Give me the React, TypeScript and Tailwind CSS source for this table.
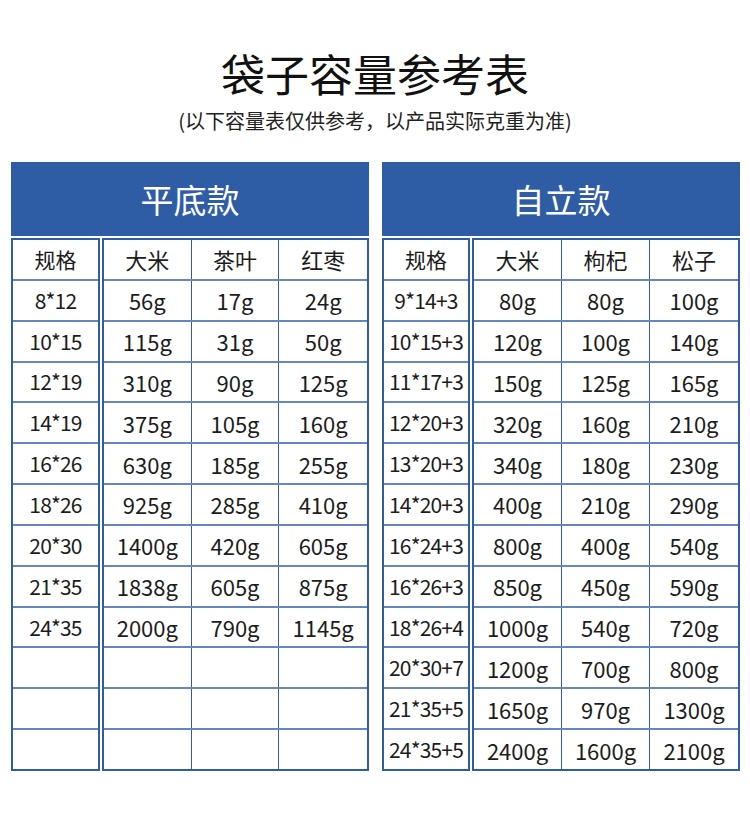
import React from "react";

type Panel = {
  title: string;
  cols: string[];
  rows: string[][];
  specW: string;
  dataW: string;
};

const left: Panel = {
  title: "平底款",
  cols: ["大米", "茶叶", "红枣"],
  rows: [
    ["8*12", "56g", "17g", "24g"],
    ["10*15", "115g", "31g", "50g"],
    ["12*19", "310g", "90g", "125g"],
    ["14*19", "375g", "105g", "160g"],
    ["16*26", "630g", "185g", "255g"],
    ["18*26", "925g", "285g", "410g"],
    ["20*30", "1400g", "420g", "605g"],
    ["21*35", "1838g", "605g", "875g"],
    ["24*35", "2000g", "790g", "1145g"],
    ["", "", "", ""],
    ["", "", "", ""],
    ["", "", "", ""],
  ],
  specW: "w-[89px]",
  dataW: "w-[267px]",
};

const right: Panel = {
  title: "自立款",
  cols: ["大米", "枸杞", "松子"],
  rows: [
    ["9*14+3", "80g", "80g", "100g"],
    ["10*15+3", "120g", "100g", "140g"],
    ["11*17+3", "150g", "125g", "165g"],
    ["12*20+3", "320g", "160g", "210g"],
    ["13*20+3", "340g", "180g", "230g"],
    ["14*20+3", "400g", "210g", "290g"],
    ["16*24+3", "800g", "400g", "540g"],
    ["16*26+3", "850g", "450g", "590g"],
    ["18*26+4", "1000g", "540g", "720g"],
    ["20*30+7", "1200g", "700g", "800g"],
    ["21*35+5", "1650g", "970g", "1300g"],
    ["24*35+5", "2400g", "1600g", "2100g"],
  ],
  specW: "w-[88px]",
  dataW: "w-[268px]",
};

function PanelView({ p }: { p: Panel }) {
  const specCells = ["规格", ...p.rows.map((r) => r[0])];
  const dataRows = [p.cols, ...p.rows.map((r) => r.slice(1))];
  return (
    <div className="flex w-[358px] flex-col">
      <div className="flex h-[74px] items-center justify-center bg-[#2e5da6] text-[33px] leading-none text-white">
        {p.title}
      </div>
      <div className="mt-[2px] flex h-[533px] justify-between">
        <div
          className={`${p.specW} flex flex-col border-2 border-[#2e5da6] divide-y-2 divide-[#6586c0]`}
        >
          {specCells.map((c, i) => (
            <div
              key={i}
              className={`flex flex-1 items-center justify-center text-[21px] leading-none text-[#1c1c1c] ${
                i === 0 ? "" : "tracking-[-0.8px]"
              }`}
            >
              {c}
            </div>
          ))}
        </div>
        <div
          className={`${p.dataW} flex flex-col border-2 border-[#2e5da6] divide-y-2 divide-[#6586c0]`}
        >
          {dataRows.map((r, i) => (
            <div key={i} className="grid flex-1 grid-cols-3 divide-x divide-[#2e5da6]">
              {r.map((c, j) => (
                <div
                  key={j}
                  className="flex items-center justify-center text-[22px] leading-none text-[#1c1c1c]"
                >
                  {c}
                </div>
              ))}
            </div>
          ))}
        </div>
      </div>
    </div>
  );
}

export default function App() {
  return (
    <div
      className="h-[818px] w-[750px] bg-white"
      style={{ fontFamily: '"Noto Sans CJK SC", "Noto Sans", sans-serif' }}
    >
      <div className="flex flex-col items-center">
        <div className="mt-[51px] h-[44px] text-[44px] leading-[44px] text-[#111]">
          袋子容量参考表
        </div>
        <div className="mt-[16px] h-[20px] text-[20px] leading-[20px] text-[#222]">
          (以下容量表仅供参考，以产品实际克重为准)
        </div>
      </div>
      <div className="mt-[31px] flex gap-[13px] pl-[11px]">
        <PanelView p={left} />
        <PanelView p={right} />
      </div>
    </div>
  );
}
